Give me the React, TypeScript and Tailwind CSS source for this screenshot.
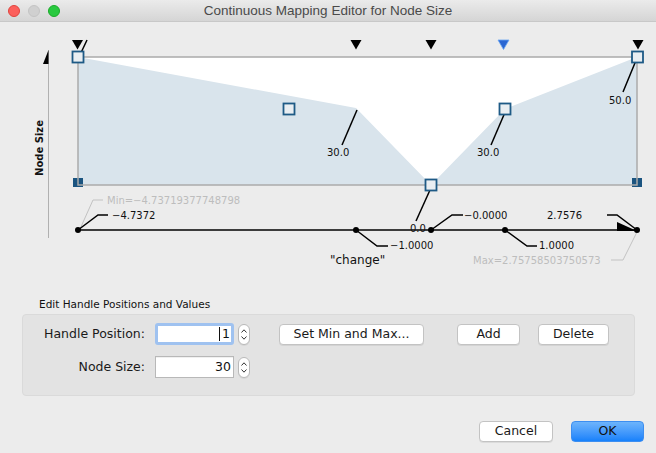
const ui = "font-['DejaVu_Sans',sans-serif]";

function Stepper() {
  return (
    <div className="flex h-[21px] w-[12px] flex-col items-center justify-center gap-[3px] rounded-[6px] border border-[#b9b9b9] bg-white shadow-[0_1px_0_rgba(0,0,0,0.06)]">
      <svg width="6" height="4" viewBox="0 0 6 4">
        <path d="M0.5 3.5 L3 0.8 L5.5 3.5" fill="none" stroke="#333" strokeWidth="1" />
      </svg>
      <svg width="6" height="4" viewBox="0 0 6 4">
        <path d="M0.5 0.5 L3 3.2 L5.5 0.5" fill="none" stroke="#333" strokeWidth="1" />
      </svg>
    </div>
  );
}

function Button({ label, className }: { label: string; className: string }) {
  return (
    <button
      className={`flex h-[21px] items-center justify-center rounded-[4px] border border-[#c3c3c3] bg-white text-[12.5px] text-[#1a1a1a] shadow-[0_1px_0_rgba(0,0,0,0.07)] ${ui} ${className}`}
    >
      {label}
    </button>
  );
}

function Chart() {
  const tri = (cx: number) => `${cx - 5.5},40 ${cx + 5.5},40 ${cx},49.5`;
  const handle = (cx: number, cy: number) => (
    <rect x={cx - 5.5} y={cy - 5.5} width="11" height="11" fill="#e9eef2" stroke="#1e5a86" strokeWidth="1.8" />
  );
  return (
    <svg width="656" height="268" viewBox="0 22 656 268" className="block">
      {/* y axis */}
      <line x1="48.5" y1="50" x2="48.5" y2="238" stroke="#b0b0b0" strokeWidth="1" />
      <polygon points="48.5,50 48.5,64 43,64" fill="#000" />
      <text
        x="43"
        y="148"
        transform="rotate(-90 43 148)"
        textAnchor="middle"
        fontFamily="DejaVu Sans"
        fontWeight="bold"
        fontSize="10"
        fill="#111"
      >
        Node Size
      </text>

      {/* mapping area */}
      <rect x="78" y="57" width="559" height="128" fill="#fff" />
      <polygon points="78,57 356,108 431,185 505,109 637,57 637,185 78,185" fill="#d9e4ec" />
      <rect x="73" y="178" width="10" height="9" fill="#1b5480" />
      <rect x="632" y="178" width="10" height="9" fill="#1b5480" />
      <rect x="78" y="57" width="559" height="128" fill="none" stroke="#ababab" strokeWidth="1.5" />

      {/* top handles */}
      <polygon points={tri(77.5)} fill="#000" />
      <polygon points={tri(356)} fill="#000" />
      <polygon points={tri(431)} fill="#000" />
      <polygon points={tri(503.5)} fill="#2a66d2" stroke="#6aa6f2" strokeWidth="0.8" />
      <polygon points={tri(638)} fill="#000" />

      {/* value leaders */}
      <g stroke="#000" strokeWidth="1.5" fill="none">
        <line x1="79" y1="57" x2="87" y2="40" />
        <line x1="357" y1="110" x2="342" y2="145" />
        <line x1="506" y1="110" x2="491" y2="145" />
        <line x1="637" y1="58" x2="623" y2="92" />
        <line x1="430" y1="190" x2="416" y2="221" />
      </g>
      {handle(78, 57)}
      {handle(289, 109)}
      {handle(431, 185)}
      {handle(505, 109)}
      {handle(637.5, 57)}

      <g fontFamily="DejaVu Sans" fontSize="10" fill="#111">
        <text x="327" y="156">30.0</text>
        <text x="477" y="156">30.0</text>
        <text x="609" y="104">50.0</text>
      </g>

      {/* x axis */}
      <line x1="78" y1="230" x2="637" y2="230" stroke="#000" strokeWidth="1.5" />
      <polygon points="617,222 617,231 637,231" fill="#000" />
      <g stroke="#c2c2c2" strokeWidth="1" fill="none">
        <polyline points="80,229 93,200 103,200" />
        <polyline points="637,232 623,260 611,260" />
      </g>
      <g stroke="#000" strokeWidth="1.5" fill="none">
        <polyline points="78,230 98,215 108,215" />
        <polyline points="356,230 377,246 388,246" />
        <polyline points="431,230 452,215 463,215" />
        <polyline points="505,230 527,246 537,246" />
        <polyline points="607,215 617,215 637,230" />
      </g>
      <g fill="#000">
        <circle cx="78" cy="230" r="3" />
        <circle cx="356" cy="230" r="3" />
        <circle cx="431" cy="230" r="3" />
        <circle cx="505" cy="230" r="3" />
        <circle cx="637" cy="230" r="3" />
      </g>
      <g fontFamily="DejaVu Sans" fontSize="10" fill="#111">
        <text x="410" y="232">0.0</text>
        <text x="112" y="219">−4.7372</text>
        <text x="390" y="249">−1.0000</text>
        <text x="464" y="219">−0.0000</text>
        <text x="539" y="249">1.0000</text>
        <text x="547" y="219">2.7576</text>
      </g>
      <g fontFamily="DejaVu Sans" fontSize="10" fill="#bdbdbd">
        <text x="107" y="204">Min=−4.73719377748798</text>
        <text x="473" y="264">Max=2.75758503750573</text>
      </g>
      <text x="330" y="264" fontFamily="DejaVu Sans" fontSize="12" fill="#111">
        "change"
      </text>
    </svg>
  );
}

export default function App() {
  return (
    <div className="flex h-[453px] w-[656px] flex-col overflow-hidden bg-[#ececec]">
      {/* Title bar */}
      <div className="grid h-[22px] grid-cols-[1fr_auto_1fr] items-center border-b border-[#c8c8c8] bg-gradient-to-b from-[#ebebeb] to-[#d5d5d5]">
        <div className="flex items-center gap-[8px] pl-[8px]">
          <span className="h-[12px] w-[12px] rounded-full border border-[#e0443e] bg-[#fc605c]" />
          <span className="h-[12px] w-[12px] rounded-full border border-[#c4c4c4] bg-[#d0d0d0]" />
          <span className="h-[12px] w-[12px] rounded-full border border-[#1aab29] bg-[#28c93f]" />
        </div>
        <div className="font-['Liberation_Sans',sans-serif] text-[13.5px] leading-none text-[#4a4a4a]">
          Continuous Mapping Editor for Node Size
        </div>
        <div />
      </div>

      <Chart />

      {/* Edit handle */}
      <div className={`h-[24px] pl-[39px] pt-[8px] text-[10.5px] leading-[13px] text-[#111] ${ui}`}>
        Edit Handle Positions and Values
      </div>
      <div className="mx-[22px] flex h-[82px] w-[613px] flex-col gap-[11px] rounded-[4px] border border-[#dadada] bg-[#e3e3e3] pt-[8px]">
        <div className="flex h-[22px] items-center">
          <div className={`w-[122px] text-right text-[12.5px] text-[#1a1a1a] ${ui}`}>Handle Position:</div>
          <div
            className={`ml-[10px] flex h-[22px] w-[79px] items-center justify-end rounded-[3px] border-[3px] border-[#9fc2f0] bg-white pr-[1px] text-[12.5px] text-[#111] ${ui}`}
          >
            <span className="mr-[2px] h-[14px] w-[1px] bg-[#111]" />1
          </div>
          <div className="ml-[4px]">
            <Stepper />
          </div>
          <Button label="Set Min and Max..." className="ml-[29px] w-[145px]" />
          <Button label="Add" className="ml-[33px] w-[63px]" />
          <Button label="Delete" className="ml-[18px] w-[71px]" />
        </div>
        <div className="flex h-[22px] items-center">
          <div className={`w-[122px] text-right text-[12.5px] text-[#1a1a1a] ${ui}`}>Node Size:</div>
          <div
            className={`ml-[10px] flex h-[22px] w-[79px] items-center justify-end border border-[#b8b8b8] bg-white pr-[2px] text-[12.5px] text-[#111] shadow-[inset_0_1px_0_rgba(0,0,0,0.06)] ${ui}`}
          >
            30
          </div>
          <div className="ml-[4px]">
            <Stepper />
          </div>
        </div>
      </div>

      {/* Footer */}
      <div className="mt-[25px] flex justify-end gap-[18px] pr-[12px]">
        <Button label="Cancel" className="w-[74px]" />
        <button
          className={`flex h-[21px] w-[73px] items-center justify-center rounded-[4px] border border-[#3d8ef0] bg-gradient-to-b from-[#6db4fb] to-[#1581fb] text-[12.5px] text-[#111] ${ui}`}
        >
          OK
        </button>
      </div>
    </div>
  );
}
